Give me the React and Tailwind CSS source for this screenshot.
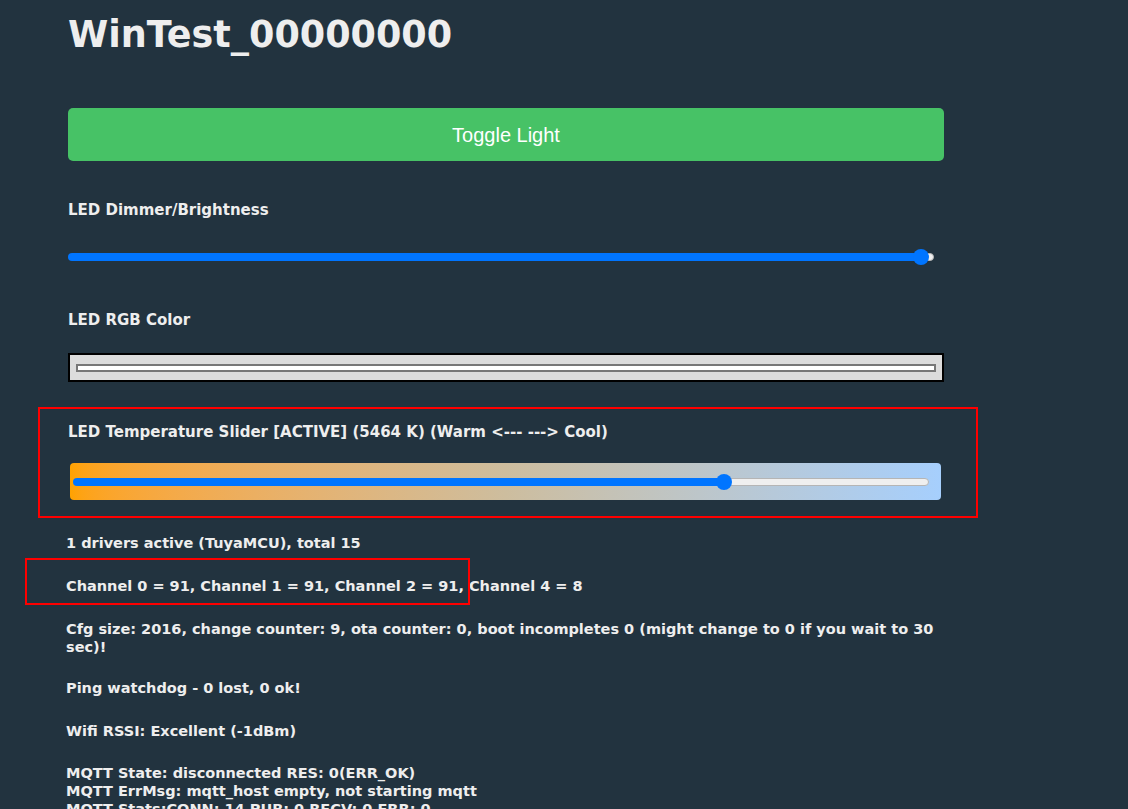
import React from 'react';

function Slider({ fill, rest, thumb }) {
  return (
    <div className="relative flex h-4 items-center">
      <div className="h-2 rounded-full bg-[#0075ff]" style={{ width: fill }}></div>
      <div className="h-2 rounded-r-full border border-[#b5b5b5] bg-[#efefef]" style={{ width: rest }}></div>
      <div className="absolute top-0 h-4 w-4 rounded-full bg-[#0075ff]" style={{ left: thumb - 8 }}></div>
    </div>
  );
}

const status = [
  { mt: 'mt-[34px]', lines: ['1 drivers active (TuyaMCU), total 15'] },
  { mt: 'mt-[25px]', lines: ['Channel 0 = 91, Channel 1 = 91, Channel 2 = 91, Channel 4 = 8'] },
  {
    mt: 'mt-[25px]',
    lines: [
      'Cfg size: 2016, change counter: 9, ota counter: 0, boot incompletes 0 (might change to 0 if you wait to 30',
      'sec)!',
    ],
  },
  { mt: 'mt-[23px]', lines: ['Ping watchdog - 0 lost, 0 ok!'] },
  { mt: 'mt-[25px]', lines: ['Wifi RSSI: Excellent (-1dBm)'] },
  {
    mt: 'mt-[24px]',
    lines: [
      'MQTT State: disconnected RES: 0(ERR_OK)',
      'MQTT ErrMsg: mqtt_host empty, not starting mqtt',
      'MQTT Stats:CONN: 14 PUB: 0 RECV: 0 ERR: 0',
    ],
  },
];

export default function App() {
  return (
    <div className="relative h-[809px] overflow-hidden bg-[#22333f] text-[#eeeeee] font-['DejaVu_Sans',Verdana,sans-serif]">
      <div className="ml-[68px] w-[876px]">
        <h1 className="pt-[15px] text-[36.5px] font-bold leading-[40px]">WinTest_00000000</h1>

        <button className="mt-[53px] flex h-[53px] w-full items-center justify-center rounded-[5px] bg-[#47c266] font-['Liberation_Sans',Arial,sans-serif] text-[20px] text-white">
          Toggle Light
        </button>

        <div className="mt-[40px] text-[15px] font-bold leading-[18px]">LED Dimmer/Brightness</div>
        <div className="mt-[30px] w-[866px]">
          <Slider fill={853} rest={13} thumb={853} />
        </div>

        <div className="mt-[46px] text-[15px] font-bold leading-[18px]">LED RGB Color</div>
        <div className="mt-[24px] flex h-[29px] items-center border-2 border-black bg-[#dcdcdc] px-[6px]">
          <div className="h-[8px] w-full border-2 border-[#777777] bg-white"></div>
        </div>

        <div className="mt-[41px] text-[15px] font-bold leading-[18px]">
          LED Temperature Slider [ACTIVE] (5464 K) (Warm &lt;--- ---&gt; Cool)
        </div>
        <div className="ml-[2px] mt-[22px] flex h-[37px] w-[871px] items-center rounded-[4px] bg-gradient-to-r from-[#ffa200] via-[#cdbd9e] to-[#a6cffd] pl-[3px]">
          <div className="w-[856px]">
            <Slider fill={651} rest={205} thumb={651} />
          </div>
        </div>

        <div className="-ml-[2px] text-[14.5px] font-bold leading-[18px]">
          {status.map((s, i) => (
            <div key={i} className={s.mt}>
              {s.lines.map((l, j) => (
                <div key={j} className="whitespace-nowrap">{l}</div>
              ))}
            </div>
          ))}
        </div>
      </div>

      {/* annotation boxes */}
      <div className="pointer-events-none absolute left-[38px] top-[407px] h-[111px] w-[940px] border-2 border-[#ff0000]"></div>
      <div className="pointer-events-none absolute left-[25px] top-[558px] h-[47px] w-[445px] border-2 border-[#ff0000]"></div>
    </div>
  );
}
